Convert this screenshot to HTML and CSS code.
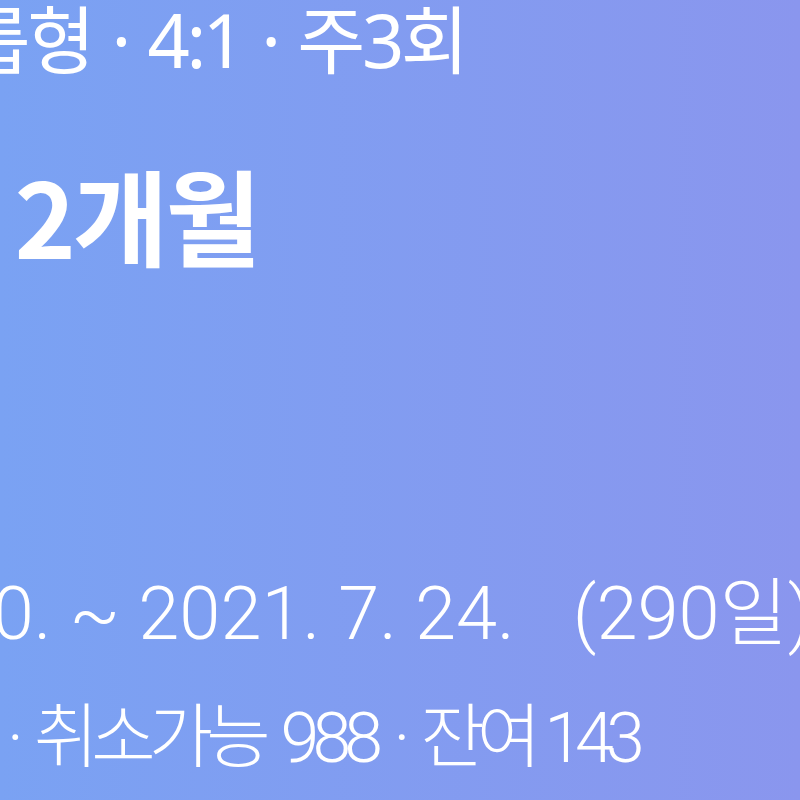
FILE: index.html
```html
<!DOCTYPE html>
<html lang="ko">
<head>
<meta charset="utf-8">
<title>수강권</title>
<link rel="stylesheet" href="styles.css">
</head>
<body>
<div class="card">
  <div class="meta">그룹형 · 4:1 · 주3회</div>
  <div class="title"><span class="lead">1</span>2개월</div>
  <div class="period">2020. 10. 10. ~ 2021. 7. 24.<span class="days">(290일)</span></div>
  <div class="counts">예약 1,131 · 취소가능 988 · <span class="remain">잔여 143</span></div>
</div>
</body>
</html>
```

FILE: styles.css
```css
html, body {
  margin: 0;
  padding: 0;
}
body {
  width: 800px;
  height: 800px;
  overflow: hidden;
}
.card {
  width: 800px;
  height: 800px;
  overflow: hidden;
  background: linear-gradient(90deg, #7aa2f3 0%, #8a96ee 100%);
  color: #ffffff;
  font-family: "Noto Sans CJK KR", "Noto Sans", sans-serif;
  white-space: nowrap;
}
.meta {
  font-family: "Noto Sans", "Noto Sans CJK KR", sans-serif;
  font-size: 74px;
  font-weight: 400;
  line-height: 74px;
  letter-spacing: -3.5px;
  word-spacing: 4px;
  padding-top: 3px;
  margin-left: -102px;
}
.title {
  font-size: 104px;
  font-weight: 700;
  line-height: 104px;
  letter-spacing: -3px;
  margin-top: 85px;
  margin-left: -110px;
}
.lead {
  margin-right: 66px;
}
.period {
  font-family: Roboto, "Noto Sans CJK KR", sans-serif;
  font-size: 74px;
  font-weight: 300;
  line-height: 74px;
  margin-top: 311px;
  margin-left: -366px;
}
.days {
  margin-left: 58px;
}
.counts {
  font-family: Roboto, "Noto Sans CJK KR", sans-serif;
  font-size: 70px;
  font-weight: 300;
  line-height: 70px;
  letter-spacing: -7px;
  word-spacing: 7px;
  margin-top: 52px;
  margin-left: -276px;
}
.remain {
  letter-spacing: -8px;
  word-spacing: 2px;
}
```
